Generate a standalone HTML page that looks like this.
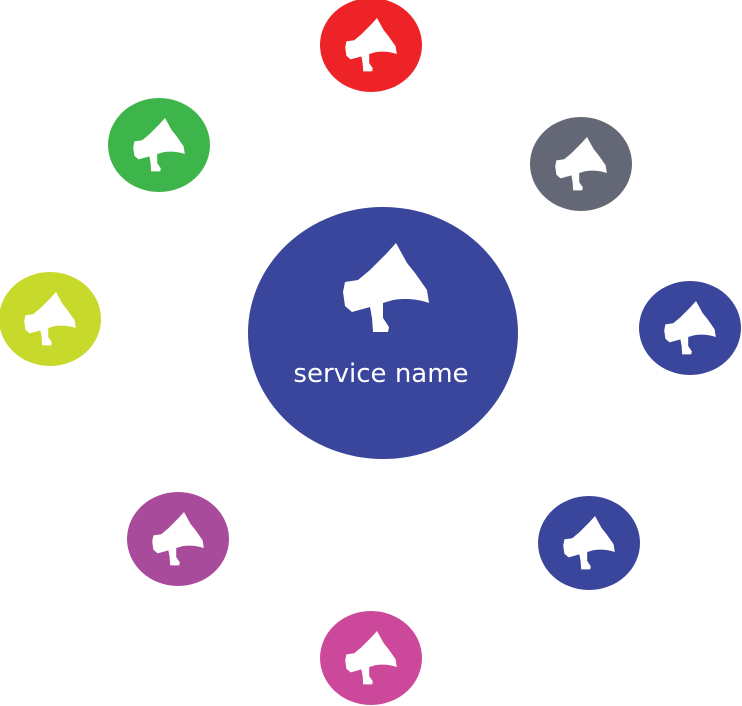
<!DOCTYPE html>
<html><head><style>
html,body{margin:0;padding:0;background:#fff;width:742px;height:706px;overflow:hidden}
svg{display:block}
</style></head><body>
<svg width="742" height="706" viewBox="0 0 742 706" xmlns="http://www.w3.org/2000/svg">
<defs>
<path id="mp" d="M345,282 L358,280 L370,270 L387,253 L396,243 L407,263 L415,273 L427,290 L429,303 C418,299 405,298 393,300 L383,303 L383,318 L389,327 L388,332 L373,332 L372,318 L370,307 L352,312 L345,306 L343,292 Z" fill="#fff"/>
</defs>
<ellipse cx="383" cy="333" rx="135" ry="126" fill="#3a459c"/>
<use href="#mp"/>
<text x="381" y="382" text-anchor="middle" font-family="DejaVu Sans, sans-serif" font-size="26" fill="#fff">service name</text>

<g>
<ellipse cx="371" cy="45" rx="51" ry="47" fill="#ed2327"/>
<ellipse cx="159" cy="145" rx="51" ry="47" fill="#3db54a"/>
<ellipse cx="581" cy="164" rx="51" ry="47" fill="#646775"/>
<ellipse cx="50" cy="319" rx="51" ry="47" fill="#c7d92b"/>
<ellipse cx="690" cy="328" rx="51" ry="47" fill="#3a459c"/>
<ellipse cx="178" cy="539" rx="51" ry="47" fill="#a94b9b"/>
<ellipse cx="589" cy="543" rx="51" ry="47" fill="#3a459c"/>
<ellipse cx="371" cy="658" rx="51" ry="47" fill="#cb489b"/>
</g>
<g transform="translate(371,45) scale(0.6) translate(-386,-288)"><use href="#mp"/></g>
<g transform="translate(159,145) scale(0.6) translate(-386,-288)"><use href="#mp"/></g>
<g transform="translate(581,164) scale(0.6) translate(-386,-288)"><use href="#mp"/></g>
<g transform="translate(50,319) scale(0.6) translate(-386,-288)"><use href="#mp"/></g>
<g transform="translate(690,328) scale(0.6) translate(-386,-288)"><use href="#mp"/></g>
<g transform="translate(178,539) scale(0.6) translate(-386,-288)"><use href="#mp"/></g>
<g transform="translate(589,543) scale(0.6) translate(-386,-288)"><use href="#mp"/></g>
<g transform="translate(371,658) scale(0.6) translate(-386,-288)"><use href="#mp"/></g>
</svg>
</body></html>
